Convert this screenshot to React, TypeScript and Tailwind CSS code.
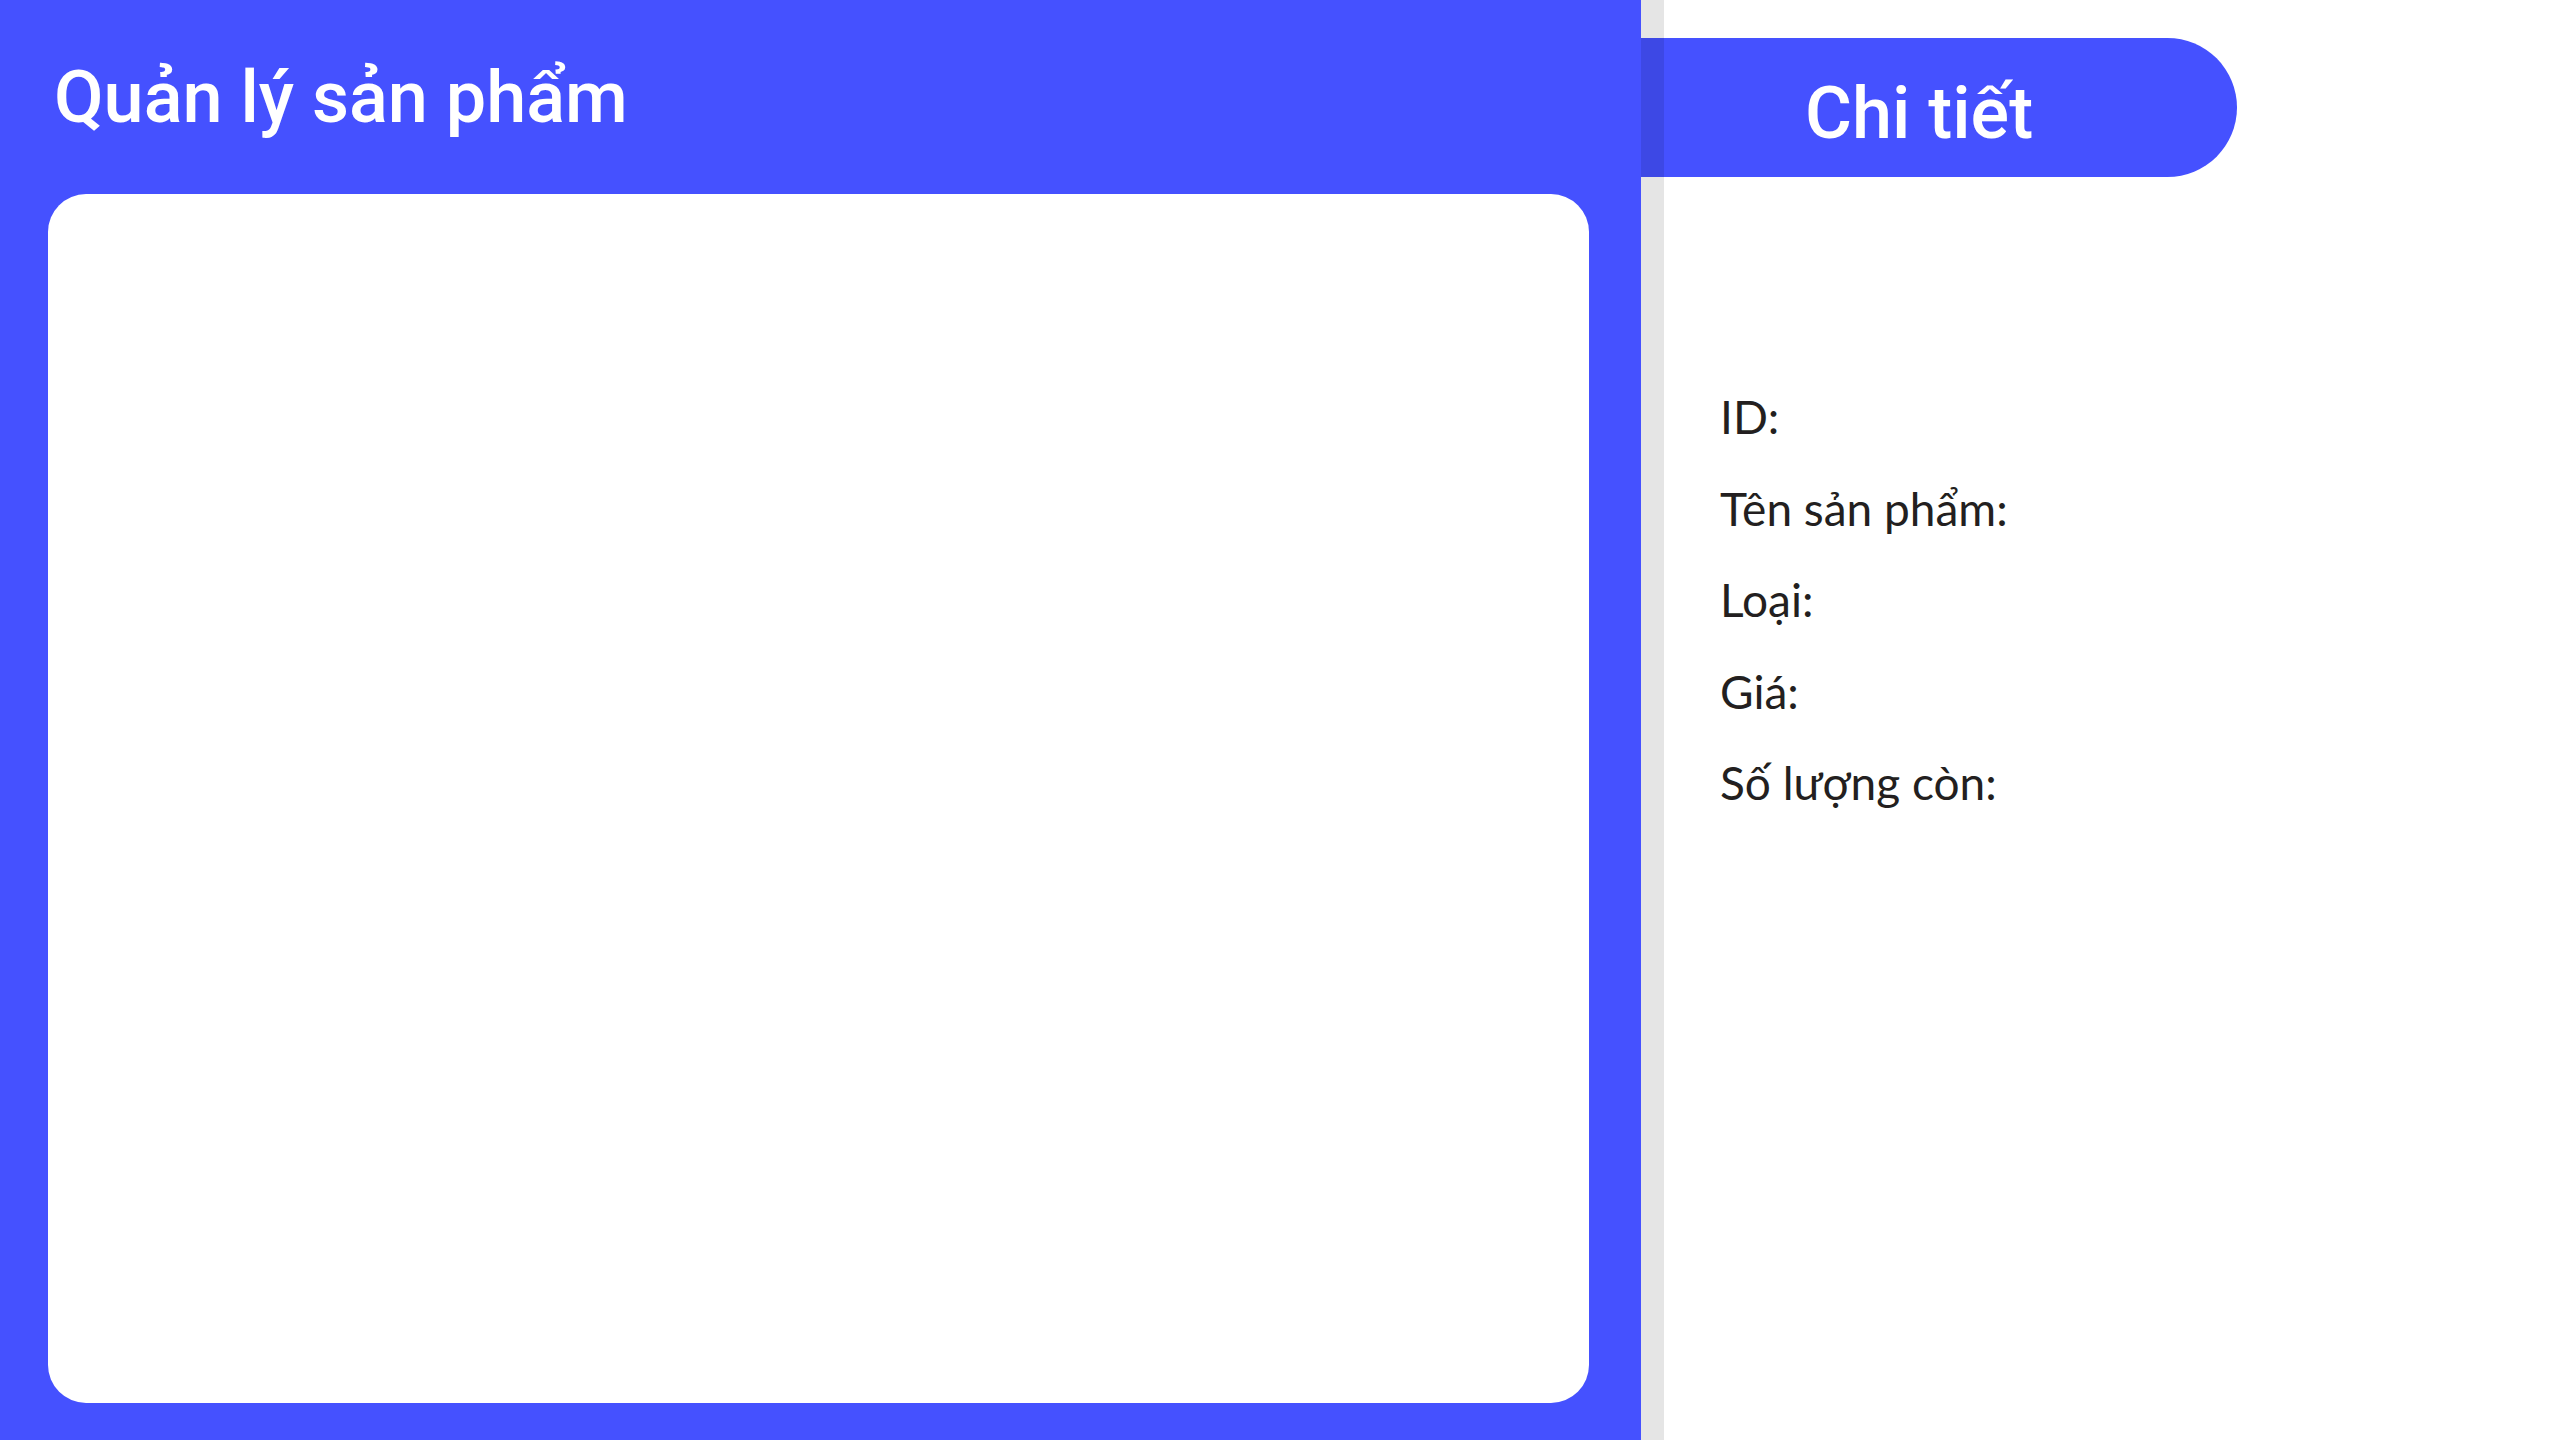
const FIELDS = ['ID:', 'Tên sản phẩm:', 'Loại:', 'Giá:', 'Số lượng còn:']

export default function App() {
  return (
    <div className="flex h-screen w-full overflow-hidden bg-white">
      <section className="flex w-[1641px] shrink-0 flex-col bg-[#4551ff] pb-[37px] pl-[48px] pr-[52px] pt-[62px]">
        <h1 className="pl-[6px] font-['Roboto',sans-serif] text-[72px] font-medium leading-[72px] text-white">
          Quản lý sản phẩm
        </h1>
        <div className="mt-[60px] flex-1 rounded-[38px] bg-white" />
      </section>

      <div className="relative z-10 w-[23px] shrink-0 bg-black/10" />

      <section className="flex-1">
        <div className="-ml-[23px] mt-[38px] h-[139px] w-[596px] rounded-r-full bg-[#4551ff] pl-[164px] pt-[40px]">
          <h2 className="font-['Roboto',sans-serif] text-[72px] font-medium leading-[72px] text-white">
            Chi tiết
          </h2>
        </div>
        <dl className="ml-[56px] mt-[194px] font-['Lato','Noto_Sans',sans-serif] text-[46px] leading-[91.5px] text-[#231f20]">
          {FIELDS.map((label) => (
            <dt key={label}>{label}</dt>
          ))}
        </dl>
      </section>
    </div>
  )
}
